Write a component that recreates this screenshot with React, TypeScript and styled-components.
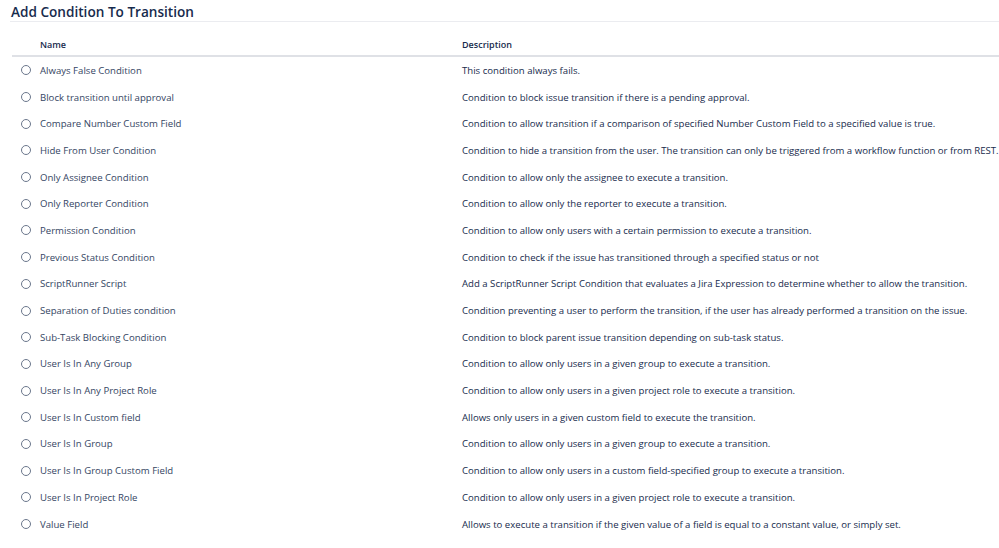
import React from "react"
import styled, { createGlobalStyle } from "styled-components"

const conditions: [string, string][] = [
    ["Always False Condition", "This condition always fails."],
    ["Block transition until approval", "Condition to block issue transition if there is a pending approval."],
    ["Compare Number Custom Field", "Condition to allow transition if a comparison of specified Number Custom Field to a specified value is true."],
    ["Hide From User Condition", "Condition to hide a transition from the user. The transition can only be triggered from a workflow function or from REST."],
    ["Only Assignee Condition", "Condition to allow only the assignee to execute a transition."],
    ["Only Reporter Condition", "Condition to allow only the reporter to execute a transition."],
    ["Permission Condition", "Condition to allow only users with a certain permission to execute a transition."],
    ["Previous Status Condition", "Condition to check if the issue has transitioned through a specified status or not"],
    ["ScriptRunner Script", "Add a ScriptRunner Script Condition that evaluates a Jira Expression to determine whether to allow the transition."],
    ["Separation of Duties condition", "Condition preventing a user to perform the transition, if the user has already performed a transition on the issue."],
    ["Sub-Task Blocking Condition", "Condition to block parent issue transition depending on sub-task status."],
    ["User Is In Any Group", "Condition to allow only users in a given group to execute a transition."],
    ["User Is In Any Project Role", "Condition to allow only users in a given project role to execute a transition."],
    ["User Is In Custom field", "Allows only users in a given custom field to execute the transition."],
    ["User Is In Group", "Condition to allow only users in a given group to execute a transition."],
    ["User Is In Group Custom Field", "Condition to allow only users in a custom field-specified group to execute a transition."],
    ["User Is In Project Role", "Condition to allow only users in a given project role to execute a transition."],
    ["Value Field", "Allows to execute a transition if the given value of a field is equal to a constant value, or simply set."],
]

const GlobalStyle = createGlobalStyle`
    body {
        margin: 0;
        background: #ffffff;
        font-family: "Open Sans", "Noto Sans", sans-serif;
    }
`

const App: React.FunctionComponent = () => (
    <Page>
        <GlobalStyle />
        <Title>Add Condition To Transition</Title>
        <Table>
            <HeadCell />
            <HeadCell>Name</HeadCell>
            <HeadCell>Description</HeadCell>
            {conditions.map(([name, desc]) => (
                <React.Fragment key={name}>
                    <RadioCell>
                        <Radio type="radio" name="condition" />
                    </RadioCell>
                    <NameCell>{name}</NameCell>
                    <DescCell>{desc}</DescCell>
                </React.Fragment>
            ))}
        </Table>
    </Page>
)

export default App

const Page = styled.div`
    width: 999px;
    height: 548px;
    overflow: hidden;
    display: flex;
    flex-direction: column;
`
const Title = styled.h2`
    margin: 0 0 0 10px;
    padding: 3px 0 0 1px;
    height: 18px;
    font-size: 13.6px;
    line-height: 18px;
    font-weight: 600;
    color: #172b4d;
    border-bottom: 1px solid #ebecf0;
`
const Table = styled.div`
    margin-left: 12px;
    display: grid;
    grid-template-columns: 28px 422px 1fr;
    grid-auto-rows: 26.7px;
    grid-template-rows: 35px;
`
const HeadCell = styled.div`
    padding: 16px 0 3px;
    font-size: 9px;
    line-height: 14px;
    font-weight: 600;
    color: #172b4d;
    border-bottom: 2px solid #dfe1e6;
`
const RadioCell = styled.div`
    display: flex;
    align-items: center;
`
const Radio = styled.input`
    appearance: none;
    margin: 0 0 0 9px;
    width: 10px;
    height: 10px;
    border-radius: 50%;
    border: 1px solid #6b778c;
    background: #fff;
    box-sizing: border-box;
`
const NameCell = styled.div`
    display: flex;
    align-items: center;
    font-size: 9.6px;
    color: #344563;
    white-space: nowrap;
`
const DescCell = styled(NameCell)`
    color: #172b4d;
`
